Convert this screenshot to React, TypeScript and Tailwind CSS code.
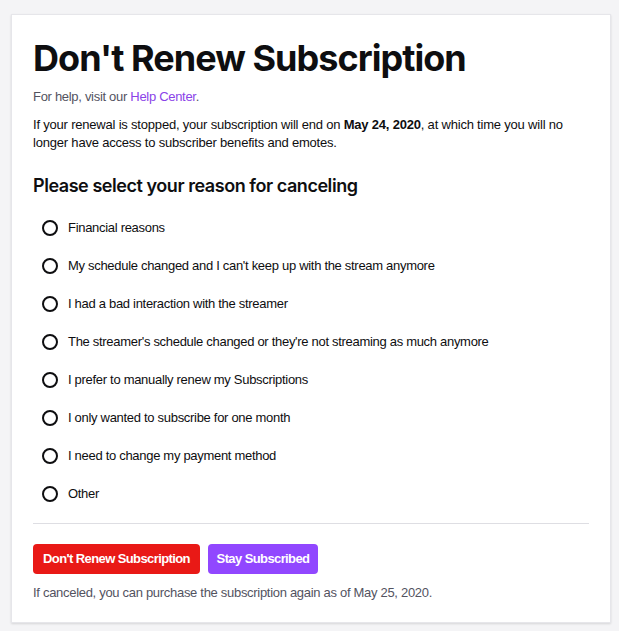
import { useState } from "react";

const reasons = [
  "Financial reasons",
  "My schedule changed and I can't keep up with the stream anymore",
  "I had a bad interaction with the streamer",
  "The streamer's schedule changed or they're not streaming as much anymore",
  "I prefer to manually renew my Subscriptions",
  "I only wanted to subscribe for one month",
  "I need to change my payment method",
  "Other",
];

export default function App() {
  const [picked, setPicked] = useState<number | null>(null);

  return (
    <div className="min-h-[631px] bg-[#f4f4f6] pt-[14px] pl-[11px] font-['Liberation_Sans',Arial,sans-serif] text-[#0e0e10]">
      <div className="w-[600px] bg-white border border-[#e6e6ea] shadow-[0_1px_2px_rgba(0,0,0,0.12)] px-[21px] pt-[21px] pb-[20px]">
        {/* title */}
        <h1 className="font-['Inter',sans-serif] font-bold text-[36px] leading-[44px] tracking-[-0.95px]">
          Don't Renew Subscription
        </h1>
        <p className="mt-[8px] text-[13px] leading-[18px] text-[#53535f] tracking-[-0.3px]">
          For help, visit our <a className="text-[#8a43e8]">Help Center</a>.
        </p>
        <p className="mt-[10px] text-[13px] leading-[18px] tracking-[-0.2px]">
          If your renewal is stopped, your subscription will end on <b>May 24, 2020</b>, at which time you will no
          longer have access to subscriber benefits and emotes.
        </p>

        {/* reasons */}
        <h2 className="mt-[22px] font-['Inter',sans-serif] font-semibold text-[18px] leading-[24px] tracking-[-0.45px]">
          Please select your reason for canceling
        </h2>
        <div className="mt-[11px] flex flex-col">
          {reasons.map((r, i) => (
            <label
              key={r}
              onClick={() => setPicked(i)}
              className="h-[38px] flex items-center gap-[10px] pl-[9px] cursor-pointer"
            >
              <span className="w-[16px] h-[16px] rounded-full border-2 border-[#0e0e10] flex items-center justify-center shrink-0">
                {picked === i && <span className="w-[8px] h-[8px] rounded-full bg-[#9147ff]" />}
              </span>
              <span className="text-[13px] leading-[18px] tracking-[-0.3px]">{r}</span>
            </label>
          ))}
        </div>

        <div className="mt-[10px] h-px bg-[#dedee3]" />

        {/* actions */}
        <div className="mt-[20px] flex gap-[8px]">
          <button className="h-[30px] w-[167px] rounded-[4px] bg-[#e91916] text-white text-[13px] font-bold tracking-[-0.6px]">
            Don't Renew Subscription
          </button>
          <button className="h-[30px] w-[110px] rounded-[4px] bg-[#9147ff] text-white text-[13px] font-bold tracking-[-0.6px]">
            Stay Subscribed
          </button>
        </div>
        <p className="mt-[10px] text-[13px] leading-[18px] text-[#53535f] tracking-[-0.3px]">
          If canceled, you can purchase the subscription again as of May 25, 2020.
        </p>
      </div>
    </div>
  );
}
